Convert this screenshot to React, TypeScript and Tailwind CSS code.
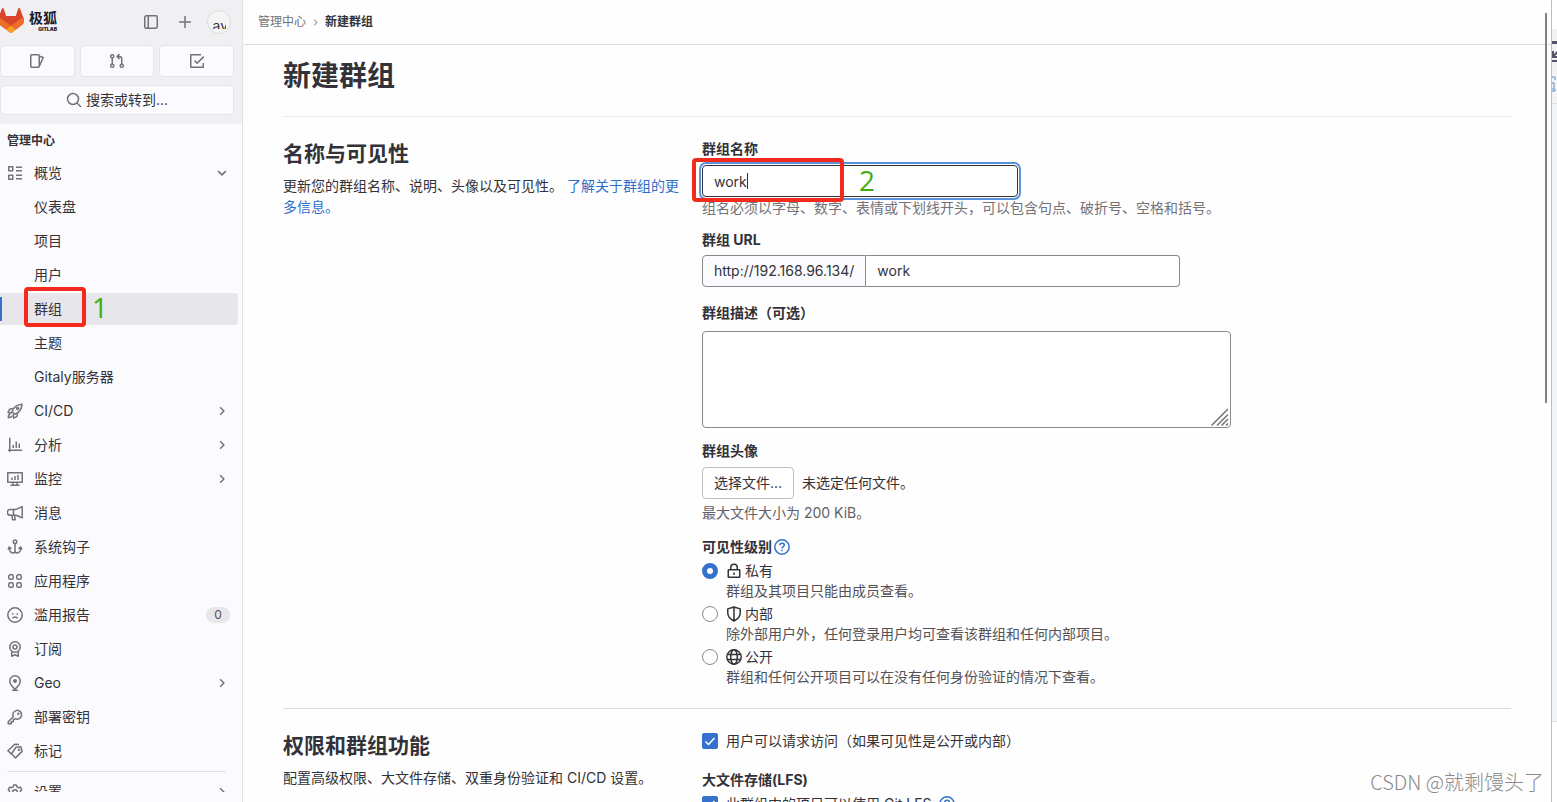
import type { ReactNode } from "react";

type IconProps = { className?: string };

// 16px line icon; every glyph below shares this frame
function Icon({ className = "h-4 w-4", children }: IconProps & { children: ReactNode }) {
  return (
    <svg
      viewBox="0 0 16 16"
      fill="none"
      stroke="currentColor"
      strokeWidth="1.5"
      strokeLinejoin="round"
      className={`shrink-0 ${className}`}
      aria-hidden="true"
    >
      {children}
    </svg>
  );
}

const OverviewIcon = () => (
  <Icon>
    <rect x="1.75" y="1.75" width="4" height="4" />
    <rect x="1.75" y="10.25" width="4" height="4" />
    <path d="M9 2.25h6M9 5.75h6M9 10.25h6M9 13.75h6" />
  </Icon>
);

const RocketIcon = () => (
  <Icon>
    <path d="M5 8.5C6.5 4.5 9.5 1.5 15 1.2c-.3 5.3-3 8.5-7.2 10.1L5 8.5Z" />
    <path d="M5.8 5.4 2.6 6.3 1 9.5l4 .2M10.6 10l-.6 3.4-3.3 1.7-.4-4" />
    <path d="M3.6 10.6c-1.4.3-2.2 1.9-2.3 4 2 0 3.6-.6 4-2" />
    <circle cx="10.6" cy="5.4" r="1" />
  </Icon>
);

const ChartIcon = () => (
  <Icon>
    <path d="M2.75.8v14M1 13.25h14M6.25 8v3M9.25 4.5V11M12.25 6.5V11" />
  </Icon>
);

const MonitorIcon = () => (
  <Icon>
    <path d="M.75 1.75h14.5v9.5H.75zM6 11.5V14M10 11.5V14M3.5 14.25h9M5 6.5V9M8 5v4M11 4v5" />
  </Icon>
);

const BullhornIcon = () => (
  <Icon>
    <path d="M15.25 1.6v11.2L9 10.2H3.2a2.4 2.4 0 0 1 0-5.8H9l6.25-2.8ZM6.5 4.4v5.8M4.8 10.3l.8 4.4h2.6l-.6-4.4" />
  </Icon>
);

const AnchorIcon = () => (
  <Icon>
    <circle cx="8" cy="2.75" r="1.75" />
    <path d="M8 4.5v9.8M1 10.5 2.2 8l2.3 1.8M15 10.5 13.8 8l-2.3 1.8M2.3 8.6c0 3.6 1.7 5.4 3.6 5.4 1.3 0 2.1-1 2.1-2 0 1 .8 2 2.1 2 1.9 0 3.6-1.8 3.6-5.4" />
  </Icon>
);

const AppsIcon = () => (
  <Icon>
    <rect x="1.75" y="1.75" width="4.5" height="4.5" rx="1.5" />
    <rect x="9.75" y="1.75" width="4.5" height="4.5" rx="1.5" />
    <rect x="1.75" y="9.75" width="4.5" height="4.5" rx="1.5" />
    <rect x="9.75" y="9.75" width="4.5" height="4.5" rx="1.5" />
  </Icon>
);

const FrownIcon = () => (
  <Icon>
    <circle cx="8" cy="8" r="7.2" />
    <path d="M5.4 11.3c1-1.9 4.2-1.9 5.2 0M5 7h1.5M9.5 7H11" />
  </Icon>
);

const LicenseIcon = () => (
  <Icon>
    <circle cx="8" cy="6" r="5.2" />
    <circle cx="8" cy="6" r="2" />
    <path d="M4.75 10.5v4.7L8 13.7l3.25 1.5v-4.7" />
  </Icon>
);

const LocationIcon = () => (
  <Icon>
    <path d="M8 14.2C4.5 11 2.75 8.5 2.75 6a5.25 5.25 0 0 1 10.5 0c0 2.5-1.75 5-5.25 8.2ZM5 15.25h6" />
    <circle cx="8" cy="6" r="1.2" fill="currentColor" />
  </Icon>
);

const KeyIcon = () => (
  <Icon>
    <path d="M6.3 7.7 1.25 12.7v2.1h3v-2h2V11l2-1.3a4.4 4.4 0 1 0-2-2Z" />
    <circle cx="11.3" cy="4.7" r=".5" />
  </Icon>
);

const LabelsIcon = () => (
  <Icon>
    <path d="m9 4.2 4.9-.4 1.2 4.6-6.600 6.500-4-4.200L9 4.200Z" />
    <path d="M12 1.500 7.700 1.200.900 7.700l3.600 3.400" />
    <circle cx="12" cy="6.700" r=".5" />
  </Icon>
);

const SettingsIcon = () => (
  <Icon>
    <path d="M6.7 1h2.6l.6 1.9 1.5.8 2-.5 1.3 2.3L13.4 7v2l1.3 1.5-1.3 2.3-2-.5-1.5.8-.6 1.9H6.7l-.6-1.9-1.5-.8-2 .5-1.3-2.3L2.6 9V7L1.3 5.5l1.3-2.3 2 .5 1.5-.8L6.700 1Z" />
    <circle cx="8" cy="8" r="2.3" />
  </Icon>
);

const SidebarIcon = () => (
  <Icon>
    <rect x="1.75" y="1.75" width="12.5" height="12.5" rx="1.5" />
    <path d="M5.25 2v12" />
  </Icon>
);

const PlusIcon = () => (
  <Icon>
    <path d="M8 2v12M2 8h12" />
  </Icon>
);

const IssuesIcon = () => (
  <Icon>
    <rect x="1.75" y="1.75" width="8.5" height="12.5" rx="1" />
    <path d="m10.5 3.2 3.7 1.3-3.7 8.3" />
  </Icon>
);

const MergeIcon = () => (
  <Icon>
    <circle cx="3.25" cy="3.25" r="1.6" />
    <circle cx="3.25" cy="12.75" r="1.6" />
    <circle cx="12.75" cy="12.75" r="1.6" />
    <path d="M3.25 5v6M12.75 11V6a2.5 2.5 0 0 0-2.5-2.5H8.5M10.5 1 8 3.5 10.5 6" />
  </Icon>
);

const TodoIcon = () => (
  <Icon>
    <path d="M12 1.75H1.75v12.5h12.5V10M5.5 7.5l2.7 2.7 6.5-6.6" />
  </Icon>
);

const SearchIcon = () => (
  <Icon>
    <circle cx="7" cy="7" r="5.5" />
    <path d="m11 11 4 4" />
  </Icon>
);

const ChevronDown = () => (
  <Icon className="h-3 w-3">
    <path d="m3 5.5 5 5 5-5" strokeWidth="2" />
  </Icon>
);

const ChevronRight = ({ className = "h-3 w-3" }: IconProps) => (
  <Icon className={className}>
    <path d="m5.5 3 5 5-5 5" strokeWidth="2" />
  </Icon>
);

const LockIcon = () => (
  <Icon>
    <rect x="2.25" y="6.75" width="11.5" height="7.5" rx=".5" />
    <path d="M4.75 6.5v-2a3.25 3.25 0 0 1 6.5 0v2M8 9.5V12" />
  </Icon>
);

const ShieldIcon = () => (
  <Icon>
    <path d="M8 1 1.75 2.9V7c0 3.5 2.5 6 6.25 8 3.75-2 6.25-4.5 6.25-8V2.9L8 1ZM8 1v14" />
  </Icon>
);

const EarthIcon = () => (
  <Icon>
    <circle cx="8" cy="8" r="7.2" />
    <ellipse cx="8" cy="8" rx="3.3" ry="7.2" />
    <path d="M1.3 5.5h13.4M1.3 10.5h13.4" />
  </Icon>
);

const QuestionIcon = () => (
  <Icon>
    <circle cx="8" cy="8" r="7.2" />
    <path d="M5.8 6.3c0-2.9 4.5-2.7 4.5-.2C10.3 7.700 8 7.600 8 9.500M8 10.700v1.500" />
  </Icon>
);

function Tanuki() {
  return (
    <svg viewBox="0 0 25 24" className="-ml-0.5 h-[25px] w-[26px] shrink-0" aria-hidden="true">
      <path
        fill="#D9452B"
        d="m24.507 9.5-.034-.09L21.082.562a.896.896 0 0 0-1.694.091l-2.29 7.01H7.825L5.535.653a.898.898 0 0 0-1.694-.09L.451 9.411.416 9.5a6.297 6.297 0 0 0 2.09 7.278l.012.01.03.022 5.16 3.867 2.56 1.935 1.554 1.176a1.051 1.051 0 0 0 1.268 0l1.555-1.176 2.56-1.935 5.197-3.89.014-.01A6.297 6.297 0 0 0 24.507 9.5Z"
      />
      <path
        fill="#EE6C2B"
        d="m24.507 9.5-.034-.09a11.44 11.44 0 0 0-4.56 2.051l-7.447 5.632 4.742 3.584 5.197-3.89.014-.01A6.297 6.297 0 0 0 24.507 9.5Z"
      />
      <path
        fill="#F5A024"
        d="m7.707 20.677 2.56 1.935 1.555 1.176a1.051 1.051 0 0 0 1.268 0l1.555-1.176 2.56-1.935-4.743-3.584-4.755 3.584Z"
      />
      <path
        fill="#EE6C2B"
        d="M5.01 11.461a11.43 11.43 0 0 0-4.56-2.05L.416 9.5a6.297 6.297 0 0 0 2.09 7.278l.012.01.03.022 5.16 3.867 4.745-3.584-7.444-5.632Z"
      />
    </svg>
  );
}

type NavItem = {
  label: string;
  icon?: () => ReactNode;
  open?: boolean;
  more?: boolean;
  active?: boolean;
  count?: number;
};

const NAV: NavItem[] = [
  { label: "概览", icon: OverviewIcon, open: true },
  { label: "仪表盘" },
  { label: "项目" },
  { label: "用户" },
  { label: "群组", active: true },
  { label: "主题" },
  { label: "Gitaly服务器" },
  { label: "CI/CD", icon: RocketIcon, more: true },
  { label: "分析", icon: ChartIcon, more: true },
  { label: "监控", icon: MonitorIcon, more: true },
  { label: "消息", icon: BullhornIcon },
  { label: "系统钩子", icon: AnchorIcon },
  { label: "应用程序", icon: AppsIcon },
  { label: "滥用报告", icon: FrownIcon, count: 0 },
  { label: "订阅", icon: LicenseIcon },
  { label: "Geo", icon: LocationIcon, more: true },
  { label: "部署密钥", icon: KeyIcon },
  { label: "标记", icon: LabelsIcon },
];

function NavRow({ item }: { item: NavItem }) {
  return (
    <li className="relative">
      <a
        href="#"
        className={`mr-1 flex h-8 items-center rounded-r pl-[7px] pr-[10px] ${item.active ? "bg-[#e7e7eb]" : ""}`}
      >
        <span className="w-[27px] text-[#737278]">{item.icon && <item.icon />}</span>
        <span className="flex-1">{item.label}</span>
        <span className="text-[#737278]">
          {item.open && <ChevronDown />}
          {item.more && <ChevronRight />}
        </span>
        {item.count !== undefined && (
          <span className="-mr-0.5 flex h-4 w-6 items-center justify-center rounded-full bg-[#e7e7eb] text-xs text-[#535158]">
            {item.count}
          </span>
        )}
      </a>
      {item.active && (
        <>
          <span className="absolute left-0 top-1 h-6 w-0.5 bg-[#3572cd]" />
          <Mark className="-top-1.5 left-6 h-10 w-[62px]" />
          <Step className="-top-0.5 left-[92px]" n={1} />
        </>
      )}
    </li>
  );
}

// red highlight frame
function Mark({ className }: { className: string }) {
  return (
    <span className={`pointer-events-none absolute rounded border-4 border-[#f42a1d] ${className}`} />
  );
}

// green step number beside a frame
function Step({ className, n }: { className: string; n: number }) {
  return (
    <span
      className={`pointer-events-none absolute font-['Open_Sans',sans-serif] text-[28px] leading-8 text-[#3fae14] ${className}`}
    >
      {n}
    </span>
  );
}

function Sidebar() {
  const shortcut =
    "flex h-8 flex-1 items-center justify-center rounded border border-[#e6e6ea] bg-[#fbfafd] text-[#737278]";
  return (
    <aside className="flex w-[243px] shrink-0 flex-col border-r border-[#e1e1e6] bg-[#fbfafd]">
      <div className="h-[124px] shrink-0 bg-[#f0f0f2] pr-2">
        <div className="flex h-[45px] items-center pb-1">
          <a href="#" className="flex items-center gap-[5px]" aria-label="极狐 GitLab">
            <Tanuki />
            <span className="flex flex-col items-end text-[#1c1a2e]">
              <span className="text-sm font-bold leading-4">极狐</span>
              <span className="text-[5px] font-black leading-[6px]">GITLAB</span>
            </span>
          </a>
          <div className="ml-auto flex items-center gap-[18px] pr-[3px] pt-0.5 text-[#737278]">
            <button aria-label="侧边栏">
              <SidebarIcon />
            </button>
            <button aria-label="新建">
              <PlusIcon />
            </button>
            <button
              className="-ml-1 flex h-6 w-6 items-center justify-center rounded-full border border-[#dcdcde] bg-[#f5f5f7] pt-1.5"
              aria-label="用户"
            >
              <span className="h-2 w-[13px] overflow-hidden text-left text-sm leading-[9px] text-[#333238]">
                av
              </span>
            </button>
          </div>
        </div>
        <div className="flex gap-[5px]">
          <button className={shortcut} aria-label="议题">
            <IssuesIcon />
          </button>
          <button className={shortcut} aria-label="合并请求">
            <MergeIcon />
          </button>
          <button className={shortcut} aria-label="待办事项">
            <TodoIcon />
          </button>
        </div>
        <button className="mt-2 flex h-[30px] w-full items-center justify-center gap-1 rounded border border-[#e6e6ea] bg-[#fbfafd]">
          <span className="text-[#737278]">
            <SearchIcon />
          </span>
          搜索或转到...
        </button>
      </div>
      <nav className="mb-[10px] min-h-0 flex-1 overflow-hidden">
        <h2 className="pb-[7px] pl-[7px] pt-2 text-xs font-bold leading-[18px]">管理中心</h2>
        <ul className="flex flex-col gap-0.5">
          {NAV.map((item) => (
            <NavRow key={item.label} item={item} />
          ))}
        </ul>
        <hr className="ml-[7px] mr-4 mt-1 border-[#e1e1e6]" />
        <ul className="mt-1">
          <NavRow item={{ label: "设置", icon: SettingsIcon, more: true }} />
        </ul>
      </nav>
    </aside>
  );
}

type Level = { id: string; icon: () => ReactNode; name: string; hint: string };

const LEVELS: Level[] = [
  { id: "private", icon: LockIcon, name: "私有", hint: "群组及其项目只能由成员查看。" },
  {
    id: "internal",
    icon: ShieldIcon,
    name: "内部",
    hint: "除外部用户外，任何登录用户均可查看该群组和任何内部项目。",
  },
  {
    id: "public",
    icon: EarthIcon,
    name: "公开",
    hint: "群组和任何公开项目可以在没有任何身份验证的情况下查看。",
  },
];

function Check({ id, children }: { id: string; children: ReactNode }) {
  return (
    <div className="flex items-center gap-2">
      <span className="grid h-4 w-4 shrink-0">
        <input
          id={id}
          type="checkbox"
          defaultChecked
          className="col-start-1 row-start-1 h-4 w-4 appearance-none rounded-xs border border-[#89888d] checked:border-[#3572cd] checked:bg-[#3572cd]"
        />
        <span className="pointer-events-none col-start-1 row-start-1 text-white">
          <Icon>
            <path d="m3.5 8.5 3 3 6-6.5" />
          </Icon>
        </span>
      </span>
      <label htmlFor={id}>{children}</label>
    </div>
  );
}

function Section({ title, intro, children }: { title: string; intro: ReactNode; children: ReactNode }) {
  return (
    <section className="grid grid-cols-[419px_minmax(0,1fr)]">
      <div className="pr-4 pt-[23px]">
        <h2 className="text-[21px] font-bold leading-7">{title}</h2>
        <p className="mt-[7px] leading-[21px]">{intro}</p>
      </div>
      <div className="pt-[22px]">{children}</div>
    </section>
  );
}

function GroupForm() {
  const label = "block font-bold";
  return (
    <form>
      <Section
        title="名称与可见性"
        intro={
          <>
            更新您的群组名称、说明、头像以及可见性。{" "}
            <a href="#" className="text-[#2f6fca]">
              了解关于群组的更多信息。
            </a>
          </>
        }
      >
        <label htmlFor="name" className={label}>
          群组名称
        </label>
        <div className="relative mt-1.5 max-w-[316px]">
          <input
            id="name"
            defaultValue="work"
            className="block h-8 w-full rounded border border-[#333238] bg-white px-[11px] outline-2 outline-offset-1 outline-[#5a93dc]"
          />
          {/* text cursor */}
          <span className="absolute left-[45px] top-2 h-4 w-px bg-[#333238]" />
          <Mark className="-left-2.5 -top-[7px] h-11 w-[152px]" />
          <Step className="-top-px left-[157px]" n={2} />
        </div>
        <p className="mt-px text-[#737278]">
          组名必须以字母、数字、表情或下划线开头，可以包含句点、破折号、空格和括号。
        </p>

        <label htmlFor="path" className={`mt-3 ${label}`}>
          群组 URL
        </label>
        <div className="mt-[5px] flex h-8 max-w-[478px]">
          <span className="flex items-center rounded-l border border-[#89888d] bg-[#fbfafd] px-[11px]">
            http://192.168.96.134/
          </span>
          <input
            id="path"
            defaultValue="work"
            className="min-w-0 flex-1 rounded-r border border-l-0 border-[#89888d] bg-white px-[11px]"
          />
        </div>

        <label htmlFor="description" className={`mt-4 ${label}`}>
          群组描述（可选）
        </label>
        <div className="relative mt-2 max-w-[529px]">
          <textarea
            id="description"
            className="block h-[97px] w-full resize-none rounded border border-[#89888d] bg-white p-2"
          />
          <svg
            viewBox="0 0 18 18"
            stroke="#737278"
            strokeWidth="1.5"
            className="absolute bottom-0.5 right-0.5 h-[18px] w-[18px]"
            aria-hidden="true"
          >
            <path d="M.5 17.5 17 1M6 17.5l11-11M10.5 17.5 17 11M15 17.5l2-2" />
          </svg>
        </div>

        <span className={`mt-[13px] ${label}`}>群组头像</span>
        <div className="mt-1.5 flex items-center gap-2">
          <button type="button" className="h-8 rounded border border-[#bfbfc3] bg-white px-[11px]">
            选择文件...
          </button>
          <span>未选定任何文件。</span>
        </div>
        <p className="mt-1 text-[#626168]">最大文件大小为 200 KiB。</p>

        <fieldset className="mt-3.5">
          <legend className="flex items-center gap-0.5 font-bold">
            可见性级别
            <a href="#" className="text-[#3572cd]" aria-label="帮助">
              <QuestionIcon />
            </a>
          </legend>
          <div className="mt-1 flex flex-col gap-[3px]">
            {LEVELS.map((l, i) => (
              <div key={l.id} className="grid grid-cols-[24px_minmax(0,1fr)] items-center">
                <input
                  id={l.id}
                  type="radio"
                  name="visibility"
                  defaultChecked={i === 0}
                  className="h-4 w-4 appearance-none rounded-full border border-[#89888d] bg-white checked:border-5 checked:border-[#3572cd]"
                />
                <label htmlFor={l.id} className="flex items-center gap-[3px]">
                  <l.icon />
                  {l.name}
                </label>
                <p className="col-start-2 text-[#535158]">{l.hint}</p>
              </div>
            ))}
          </div>
        </fieldset>
      </Section>

      <hr className="mt-[21px] border-[#dcdcde]" />

      <Section title="权限和群组功能" intro="配置高级权限、大文件存储、双重身份验证和 CI/CD 设置。">
        <Check id="request-access">用户可以请求访问（如果可见性是公开或内部）</Check>
        <p className="mt-[19px] font-bold">大文件存储(LFS)</p>
        <div className="mt-1 flex items-center gap-2">
          <Check id="lfs">此群组中的项目可以使用 Git LFS</Check>
          <a href="#" className="text-[#3572cd]" aria-label="LFS 帮助">
            <QuestionIcon />
          </a>
        </div>
      </Section>
    </form>
  );
}

// sliver of the window that sits behind this one
function BackWindow() {
  return (
    <div className="flex w-1.5 shrink-0 flex-col overflow-hidden border-l border-[#bdbdbd] bg-white">
      <div className="h-[29px]" />
      <div className="h-[75px] border-b border-[#e0e0e0] bg-[#f3f3f3]">
        <svg viewBox="0 0 5 74" className="h-[74px] w-[5px]" aria-hidden="true">
          <path d="M0 12h5v3H0zM0 31h5v2H0z" fill="#55526a" />
          <path d="M0 22v7h5v-2H3l2-2v-3L2 25v-3z" fill="#55526a" />
          <path d="M0 48h3v3M0 54h2v6H0M0 62h3v-2" fill="none" stroke="#5b8fd0" />
        </svg>
      </div>
      <div className="flex-1 border-b border-[#e0e0e0] bg-[#f3f4f8]" />
      <div className="h-20" />
    </div>
  );
}

export default function App() {
  return (
    <div className="relative flex h-screen overflow-hidden bg-[#fefefe] font-['Inter','Noto_Sans_CJK_SC',sans-serif] text-sm leading-5 text-[#333238]">
      <Sidebar />
      <main className="relative flex min-w-0 flex-1 flex-col overflow-hidden">
        <nav className="flex h-[45px] shrink-0 items-center gap-1 border-b border-[#dcdcde] px-[15px] text-xs">
          <a href="#" className="text-[#737278]">
            管理中心
          </a>
          <span className="px-px text-[#a4a3a8]">
            <ChevronRight className="h-[9px] w-[9px]" />
          </span>
          <a href="#" className="font-bold">
            新建群组
          </a>
        </nav>
        <div className="px-10">
          <h1 className="border-b border-[#ececef] pb-[22px] pt-[13px] text-[28px] font-bold leading-9">
            新建群组
          </h1>
          <GroupForm />
        </div>
        <span className="absolute right-1 top-[13px] h-[390px] w-0.5 bg-[#808080]" />
      </main>
      <BackWindow />
      <span className="pointer-events-none absolute bottom-1.5 right-[13px] font-['Noto_Sans_CJK_SC',sans-serif] text-xl font-light leading-7 text-[#8a8a8a]">
        CSDN @就剩馒头了
      </span>
    </div>
  );
}
